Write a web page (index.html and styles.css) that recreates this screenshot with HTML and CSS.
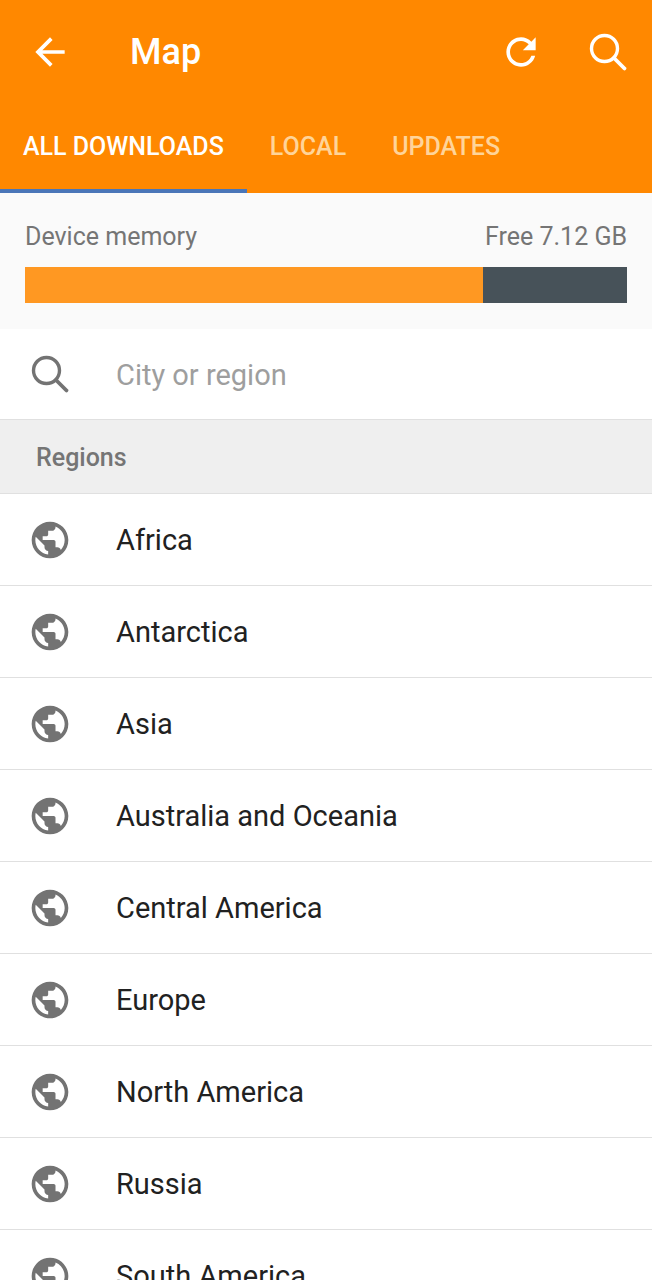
FILE: index.html
```html
<!DOCTYPE html>
<html lang="en">
<head>
  <meta charset="UTF-8" />
  <meta name="viewport" content="width=device-width, initial-scale=1" />
  <title>Map</title>
  <link rel="stylesheet" href="styles.css">
</head>
<body>
  <svg class="sprite" aria-hidden="true">
    <symbol id="icon-back" viewBox="0 0 24 24">
      <path d="M20 11H7.83l5.59-5.59L12 4l-8 8 8 8 1.41-1.41L7.83 13H20v-2z" />
    </symbol>
    <symbol id="icon-refresh" viewBox="0 0 24 24">
      <path d="M17.65 6.35C16.2 4.9 14.21 4 12 4c-4.42 0-7.99 3.58-7.99 8s3.57 8 7.99 8c3.73 0 6.84-2.55 7.73-6h-2.08c-.82 2.33-3.04 4-5.65 4-3.31 0-6-2.69-6-6s2.69-6 6-6c1.66 0 3.14.69 4.22 1.78L13 11h7V4l-2.35 2.35z" />
    </symbol>
    <symbol id="icon-search" viewBox="0 0 44 44">
      <circle cx="18.5" cy="18.5" r="13" fill="none" stroke="currentColor" stroke-width="3.4" />
      <path d="M28 28l10.5 10.5" fill="none" stroke="currentColor" stroke-width="3.8" stroke-linecap="round" />
    </symbol>
    <symbol id="icon-globe" viewBox="0 0 24 24">
      <path d="M12 2C6.48 2 2 6.48 2 12s4.48 10 10 10 10-4.48 10-10S17.52 2 12 2zm-1 17.93c-3.95-.49-7-3.85-7-7.93 0-.62.08-1.21.21-1.79L9 15v1c0 1.1.9 2 2 2v1.93zm6.9-2.54c-.26-.81-1-1.39-1.9-1.39h-1v-3c0-.55-.45-1-1-1H8v-2h2c.55 0 1-.45 1-1V7h2c1.1 0 2-.9 2-2v-.41c2.93 1.19 5 4.06 5 7.41 0 2.08-.8 3.97-2.1 5.39z" />
    </symbol>
  </svg>

  <header>
    <div class="toolbar">
      <button type="button" aria-label="Back"><svg class="icon"><use href="#icon-back" /></svg></button>
      <h1>Map</h1>
      <button type="button" aria-label="Refresh"><svg class="icon"><use href="#icon-refresh" /></svg></button>
      <button type="button" aria-label="Search"><svg class="icon"><use href="#icon-search" /></svg></button>
    </div>
    <nav class="tabs">
      <a href="#all" class="active" aria-current="page">ALL DOWNLOADS</a>
      <a href="#local">LOCAL</a>
      <a href="#updates">UPDATES</a>
    </nav>
  </header>

  <main>
    <section class="memory">
      <div class="memory-text">
        <span>Device memory</span>
        <span>Free 7.12 GB</span>
      </div>
      <div class="memory-bar"><div class="memory-used" style="width: 76%"></div></div>
    </section>

    <form class="search" role="search">
      <label for="region"><svg class="icon" role="img" aria-label="Search regions"><use href="#icon-search" /></svg></label>
      <input type="text" id="region" placeholder="City or region" />
    </form>

    <h2>Regions</h2>
    <ul class="regions">
      <li><a href="#africa"><svg class="icon"><use href="#icon-globe" /></svg>Africa</a></li>
      <li><a href="#antarctica"><svg class="icon"><use href="#icon-globe" /></svg>Antarctica</a></li>
      <li><a href="#asia"><svg class="icon"><use href="#icon-globe" /></svg>Asia</a></li>
      <li><a href="#australia"><svg class="icon"><use href="#icon-globe" /></svg>Australia and Oceania</a></li>
      <li><a href="#central-america"><svg class="icon"><use href="#icon-globe" /></svg>Central America</a></li>
      <li><a href="#europe"><svg class="icon"><use href="#icon-globe" /></svg>Europe</a></li>
      <li><a href="#north-america"><svg class="icon"><use href="#icon-globe" /></svg>North America</a></li>
      <li><a href="#russia"><svg class="icon"><use href="#icon-globe" /></svg>Russia</a></li>
      <li><a href="#south-america"><svg class="icon"><use href="#icon-globe" /></svg>South America</a></li>
    </ul>
  </main>
</body>
</html>
```
FILE: styles.css
```css
* { box-sizing: border-box; }
body { display: flex; flex-direction: column; height: 100vh; margin: 0; font-family: Roboto, sans-serif; background: #fff; color: #212121; }
h1, h2, ul { margin: 0; padding: 0; }
a { color: inherit; text-decoration: none; }
button { display: block; padding: 0; border: 0; background: none; color: inherit; cursor: pointer; }
.sprite { display: none; }
.icon { display: block; flex: none; width: 44px; height: 44px; fill: currentColor; }

header { flex: none; background: #ff8800; color: #fff; }
.toolbar { display: flex; align-items: center; gap: 43px; height: 103px; padding: 0 22px 0 28px; }
.toolbar h1 { flex: 1; padding-left: 15px; font-size: 36px; font-weight: 500; line-height: 44px; }
.tabs { display: flex; height: 90px; }
.tabs a { display: flex; align-items: center; padding: 0 23px; border-bottom: 4px solid transparent; font-size: 25px; font-weight: 500; color: #ffd499; }
.tabs .active { border-color: #4a76b8; color: #fff; }

main { flex: 1; min-height: 0; overflow-y: auto; scrollbar-width: none; }
.memory { padding: 28px 25px 26px; background: #fafafa; color: #757575; }
.memory-text { display: flex; justify-content: space-between; margin-bottom: 14px; font-size: 25px; line-height: 32px; }
.memory-bar { height: 36px; background: #475259; }
.memory-used { height: 100%; background: #ff9822; }

.search { display: flex; align-items: center; gap: 44px; height: 91px; padding: 0 28px; border-bottom: 1px solid #e0e0e0; color: #737373; }
.search input { flex: 1; min-width: 0; padding: 2px 0 0; border: 0; outline: 0; background: none; font: inherit; font-size: 29px; color: #212121; }
.search input::placeholder { color: #9e9e9e; opacity: 1; }

h2 { padding: 2px 36px 0; border-bottom: 1px solid #e0e0e0; background: #efefef; color: #757575; font-size: 25px; font-weight: 500; line-height: 71px; }
.regions { list-style: none; }
.regions a { display: flex; align-items: center; gap: 44px; height: 92px; padding: 0 28px; border-bottom: 1px solid #e0e0e0; font-size: 29px; }
.regions .icon { color: #737373; }
```
